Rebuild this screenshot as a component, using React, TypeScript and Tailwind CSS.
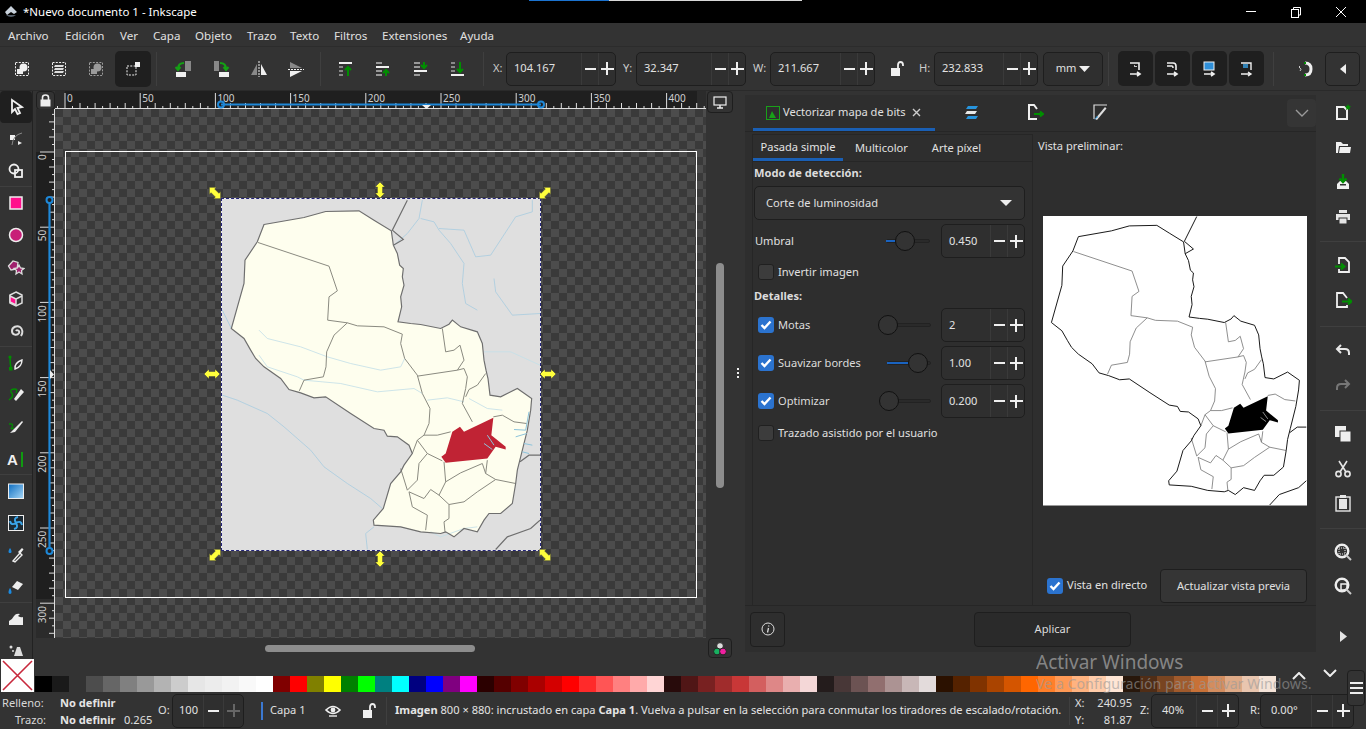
import type { ReactNode } from "react";

const palette = [
  "#000000", "#1a1a1a", "#333333", "#4d4d4d", "#666666", "#808080", "#999999", "#b3b3b3", "#cccccc", "#e6e6e6", "#ececec", "#f2f2f2", "#f9f9f9", "#ffffff",
  "#800000", "#ff0000", "#808000", "#ffff00", "#008000", "#00ff00", "#008080", "#00ffff", "#000080", "#0000ff", "#800080", "#ff00ff",
  "#2b0000", "#550000", "#800000", "#aa0000", "#d40000", "#ff0000", "#ff2a2a", "#ff5555", "#ff8080", "#ffaaaa", "#ffd5d5",
  "#280b0b", "#501616", "#782121", "#a02c2c", "#c83737", "#d35f5f", "#de8787", "#e9afaf", "#f4d7d7",
  "#241c1c", "#483737", "#6c5353", "#916f6f", "#ac9393", "#c8b7b7", "#e3dbdb",
  "#2b1100", "#552200", "#803300", "#aa4400", "#d45500", "#ff6600", "#ff7f2a", "#ff9955", "#ffb380", "#ffccaa", "#ffe6d5",
  "#28170b", "#502d16", "#784421", "#a05a2c", "#c87137", "#d38d5f", "#deaa87", "#e9c6af", "#f4e3d7",
];

const menus = [
  ["Archivo", "w-[57px]"], ["Edición", "w-[55px]"], ["Ver", "w-[33px]"], ["Capa", "w-[42px]"], ["Objeto", "w-[52px]"],
  ["Trazo", "w-[43px]"], ["Texto", "w-[44px]"], ["Filtros", "w-[48px]"], ["Extensiones", "w-[78px]"], ["Ayuda", "w-[50px]"],
];

// map traced in the 954x1050 space of the embedded image
const outline = "M190,163 L310,142 L375,124 L475,122 L520,150 L572,182 L578,225 L590,250 L597,285 L608,295 L605,320 L610,345 L600,380 L603,410 L592,455 L630,460 L660,463 L720,475 L745,462 L755,450 L780,470 L830,485 L845,520 L850,570 L856,600 L862,625 L868,675 L900,680 L950,655 L993,685 L990,720 L980,780 L960,860 L950,900 L945,940 L935,1000 L900,1030 L865,1030 L850,1050 L830,1085 L790,1075 L760,1100 L735,1085 L720,1090 L660,1085 L600,1070 L520,1065 L518,1050 L548,1015 L570,940 L600,905 L610,885 L635,850 L625,825 L590,800 L560,798 L550,780 L520,775 L450,730 L375,680 L340,683 L300,668 L265,658 L240,625 L190,590 L165,565 L150,540 L130,505 L92,475 L130,340 L133,270 L170,215 Z";
const borders = [
  "M172,217 L385,288 L410,362 L385,380 L381,450 L440,458 L470,467 L550,470 L605,492",
  "M440,458 L400,495 L378,545 L376,590 L368,620 L310,630 L296,662",
  "M605,492 L600,520 L612,565 L650,615 L665,670 L688,715 L685,760 L670,795",
  "M650,618 L770,600 L790,595 L800,620 L795,655 L785,700 L815,755",
  "M725,475 L735,545 L760,540 L778,525 L790,570 L770,600",
  "M855,610 L830,645 L805,658 L795,680",
  "M650,810 L670,795 L710,795 L750,785",
  "M635,850 L650,810 L680,850 L725,872",
  "M680,850 L655,880 L650,930 L620,960 L600,895",
  "M878,740 L905,735 L940,755 L978,760",
  "M730,875 L735,935 L715,975 L690,958 L670,985 L625,965 L635,1010 L680,1035 L675,1080",
  "M735,935 L780,908 L845,880 L855,910 L885,928 L945,940",
  "M885,928 L830,965 L790,995 L745,1003 L715,975",
  "M745,1003 L745,1045 L730,1055 L733,1085",
  "M860,870 L855,910",
];
const innerRivers = [
  "M175,480 L200,505 L300,530 L380,560 L450,580 L540,600 L600,590 L612,565",
  "M175,555 L200,590 L290,620 L310,630 L420,640 L530,665 L640,655 L665,670",
  "M680,690 L740,683 L790,695",
  "M805,685 L860,715 L905,720",
  "M690,1085 L720,1100 L790,1075 L830,1070",
  "M850,545 L930,545 L1018,585",
];
const outerRivers = [
  "M65,675 L110,690 L200,730 L250,770 L330,840 L370,890 L440,940 L510,985 L545,1015",
  "M665,90 L655,145 L620,190 L580,225",
  "M660,145 L700,155 L715,180 L750,220 L790,280 L785,340 L795,400 L830,420",
  "M715,175 L790,180 L825,260 L870,255 L945,140 L995,125 L995,90",
  "M880,325 L885,365 L935,435 L1018,430",
  "M65,420 L92,475",
  "M520,1070 L495,1090 L500,1138",
];
const neighbours = [
  "M620,90 L575,180 L608,208 L578,225",
  "M1018,855 L985,855 L958,875",
  "M1018,1050 L990,1075 L920,1100 L885,1138",
];
const red = "M778,770 L790,785 L878,743 L872,795 L915,830 L915,838 L885,830 L860,865 L735,878 L722,860 L735,850 L755,785 Z";

function MapArt({ preview }: { preview?: boolean }) {
  return (
    <svg viewBox="64 88 954 1050" className="block h-full w-full" fill="none">
      {!preview &&
        outerRivers.map((d) => <path key={d} d={d} stroke="#a9cde0" strokeWidth="2.5" />)}
      <path d={outline} fill={preview ? "#fff" : "#fefeee"} />
      {!preview &&
        innerRivers.map((d) => <path key={d} d={d} stroke="#c4e0e8" strokeWidth="2.5" />)}
      {borders.map((d) => (
        <path key={d} d={d} stroke={preview ? "#777" : "#8a8a80"} strokeWidth="3" />
      ))}
      <path d={outline} stroke={preview ? "#111" : "#6e6e6e"} strokeWidth="3.5" />
      {neighbours.map((d) => (
        <path key={d} d={d} stroke={preview ? "#111" : "#6e6e6e"} strokeWidth="3.5" />
      ))}
      <path d={red} fill={preview ? "#000" : "#c02334"} />
      {!preview && (
        <path
          d="M985,725 L975,780 L940,778 M978,790 L945,800 M970,820 L995,825 M965,845 L985,850 M860,795 L880,825 M850,820 L875,838"
          stroke="#8cc4dc"
          strokeWidth="3"
        />
      )}
      {preview && <path d="M860,800 L878,825 M852,820 L872,835" stroke="#fff" strokeWidth="2" />}
    </svg>
  );
}

function Glyph({ children, size = 18 }: { children: ReactNode; size?: number }) {
  return (
    <svg width={size} height={size} viewBox="0 0 18 18" fill="none" className="block shrink-0">
      {children}
    </svg>
  );
}

const W = "#f0f0f0";
const G = "#008f00";

const leftIcons: ReactNode[] = [
  <path d="M5 2 L15 9 L10.5 10 L13 15 L10.5 16 L8 11 L5 14 Z" stroke={W} strokeWidth="1.8" />,
  <g><rect x="3" y="5" width="5" height="5" fill={W} /><path d="M5 15 Q6 5 15 3" stroke="#888" /><path d="M11 11 L15 13 L11 15 Z" fill={W} /></g>,
  <g stroke={W} strokeWidth="1.8"><circle cx="7" cy="7" r="4.5" /><rect x="8" y="8" width="7" height="7" /></g>,
  <rect x="3" y="3" width="12" height="12" fill="#ff0f8c" stroke="#eee" strokeWidth="1.5" />,
  <circle cx="9" cy="9" r="6.5" fill="#c81e78" stroke="#eee" strokeWidth="1.5" />,
  <g stroke="#ddd" strokeWidth="1.3"><path d="M1.5 8 L6 3 L11 4.5 L10 11 L4 12 Z" fill="#a0206e" /><path d="M12 7 L13.5 10 L17 10.5 L14.5 12.5 L15 16 L12 14 L9 16 L9.5 12.5 L7 10.5 L10.5 10 Z" fill="#a0206e" /></g>,
  <g stroke="#ddd" strokeWidth="1.5"><path d="M9 2 L15 5 L15 13 L9 16 L3 13 L3 5 Z" /><path d="M3 6 L9 9 L9 15 L3 12 Z" fill="#ff0f8c" /><path d="M9 9 L15 6" /></g>,
  <path d="M9 9 C10 7 13 9 12 11 C10 14 5 13 5 9 C5 5 10 3 13 5 C16 7 16 11 14 14" stroke="#ddd" strokeWidth="2" />,
  <g><path d="M3 3 Q3 9 4 14" stroke={G} strokeWidth="1.5" /><circle cx="3" cy="3" r="1.6" fill={G} /><rect x="2" y="13" width="3.5" height="3.5" fill={G} /><path d="M8 15 Q7 9 15 6 Q15 13 8 15 Z" stroke="#eee" strokeWidth="1.4" /></g>,
  <g><path d="M2 14 Q8 10 4 6 Q3 3 8 3 Q11 3 9 7" stroke={G} strokeWidth="1.4" /><path d="M7 13 L14 3 L17 6 L9 15 Z" fill="#eee" /></g>,
  <g><path d="M2 6 Q7 5 5 9 Q3 12 7 10 " stroke={G} strokeWidth="1.3" /><path d="M3 15 L6 12 L15 3 L16 4 L8 14 Z" fill="#eee" /></g>,
  <g><text x="0" y="15" fontSize="15" fontWeight="700" fontFamily="Liberation Sans" fill={W}>A</text><rect x="14" y="2" width="2" height="15" fill="#109a10" /></g>,
  <g><defs><linearGradient id="grad1" x1="0" y1="0" x2="1" y2="1"><stop offset="0" stopColor="#0b6cc0" /><stop offset="1" stopColor="#a8d8f8" /></linearGradient></defs><rect x="1.5" y="2" width="15" height="14.5" fill="url(#grad1)" stroke="#eee" /></g>,
  <g><rect x="1.5" y="1.5" width="15" height="15" fill="#1d2a33" stroke="#eee" /><path d="M9 9 Q6 4 11 3 M9 9 Q14 6 15 11 M9 9 Q12 14 7 15 M9 9 Q4 12 3 7" stroke="#3aa4e8" strokeWidth="2" /></g>,
  <g><path d="M3 2 C1 5 1 7 3 7 C5 7 5 5 3 2 Z" fill="#1b8ae0" /><path d="M6 15 L13 7 L15 9 L8 16 Z" stroke="#eee" strokeWidth="1.4" /><path d="M11 6 L15 2 L16.5 3.5 L13 8 Z" fill="#eee" /></g>,
  <g><path d="M3 10 C1 13 1 16 3 16 C5 16 5 13 3 10 Z" fill="#1b8ae0" /><path d="M5 9 L10 3 L16 6 L11 12 Z" fill="#eee" /></g>,
  <path d="M2 15 L2 11 Q5 10 7 6 Q9 3 13 4 L11 6 Q14 8 16 7 L16 15 Z" fill="#eee" />,
  <g fill="#ddd"><path d="M10 5 L13 5 L16 14 L7 14 Z" /><circle cx="4" cy="5" r="1.5" /><circle cx="6" cy="9" r="1" /></g>,
];

const topIcons: ReactNode[] = [
  <g><rect x="2.5" y="2.5" width="13" height="13" stroke={W} strokeDasharray="2 1.3" /><rect x="4" y="9" width="6" height="5" fill={W} /><circle cx="10.5" cy="7.5" r="4" fill={W} /></g>,
  <g><rect x="2.5" y="2.5" width="13" height="13" stroke={W} strokeDasharray="2 1.3" /><path d="M5 5 H14 L13 7 H4 Z M5 8 H14 L13 10 H4 Z M5 11 H14 L13 13 H4 Z" fill="#ddd" /></g>,
  <g opacity="0.55"><rect x="2.5" y="2.5" width="13" height="13" stroke={W} strokeDasharray="2 1.3" /><rect x="4" y="9" width="6" height="5" fill={W} /><circle cx="10.5" cy="7.5" r="4" fill={W} /></g>,
];

const transformIcons: ReactNode[] = [
  <g><rect x="10" y="1" width="6" height="10" fill="#888" /><rect x="1" y="12" width="10" height="5" fill={W} /><path d="M9 3 Q3 3 3 9 M0.5 7 L3 10 L5.5 7" stroke="#14a014" strokeWidth="2" /></g>,
  <g><rect x="2" y="1" width="5" height="10" fill="#888" /><rect x="7" y="12" width="10" height="5" fill={W} /><path d="M8 3 Q14 3 14 9 M11.5 7 L14 10 L16.5 7" stroke="#14a014" strokeWidth="2" /></g>,
  <g><path d="M7 4 L7 15 L1 15 Z" fill="#888" /><path d="M11 4 L11 15 L17 15 Z" fill={W} /><path d="M9 1 V17" stroke={W} strokeDasharray="2 1" /></g>,
  <g><path d="M3 2 L15 8 L3 8 Z" fill="#888" /><path d="M3 11 L15 11 L3 17 Z" fill={W} /><path d="M1 9.5 H17" stroke={W} strokeDasharray="2 1" /></g>,
];

const raiseIcons: ReactNode[] = [
  <g><rect x="1" y="2" width="13" height="2" fill={W} /><path d="M1 7 H5 M1 11 H5 M1 15 H5" stroke="#888" strokeWidth="2" /><path d="M10 16 V8 M7 10 L10 7 L13 10" stroke={G} strokeWidth="2" /></g>,
  <g><rect x="1" y="6" width="13" height="2" fill={W} /><path d="M1 3 H7 M1 11 H7 M1 15 H7" stroke="#999" strokeWidth="2" /><path d="M11 16 V11 M8 13 L11 10 L14 13" stroke={G} strokeWidth="2" /></g>,
  <g><rect x="1" y="10" width="13" height="2" fill={W} /><path d="M1 3 H7 M1 7 H7 M1 15 H7" stroke="#999" strokeWidth="2" /><path d="M11 2 V7 M8 5 L11 8 L14 5" stroke={G} strokeWidth="2" /></g>,
  <g><rect x="1" y="14" width="13" height="2" fill={W} /><path d="M1 3 H5 M1 7 H5 M1 11 H5" stroke="#888" strokeWidth="2" /><path d="M10 2 V11 M7 9 L10 12 L13 9" stroke={G} strokeWidth="2" /></g>,
];

const snapIcons: ReactNode[] = [
  <g stroke={W} strokeWidth="1.6"><path d="M3 3 H12 V10" /><path d="M3 14 H12 M10 12 L13 14 L10 16" /><path d="M7 6 H9 V8" strokeDasharray="1 1" /></g>,
  <g stroke={W} strokeWidth="1.6"><path d="M3 3 H9 Q12 3 12 6 V10" /><path d="M3 6 H8 Q9 6 9 8" /><path d="M3 14 H12 M10 12 L13 14 L10 16" /></g>,
  <g><rect x="3" y="2" width="10" height="8" fill="#2f8fd8" stroke={W} /><path d="M3 14 H12 M10 12 L13 14 L10 16" stroke={W} strokeWidth="1.6" /></g>,
  <g stroke={W} strokeWidth="1.4"><path d="M3 3 H13 V10" /><path d="M5 5 L10 5 M5 7 L10 7" stroke="#3aa4e8" /><path d="M3 14 H12 M10 12 L13 14 L10 16" /></g>,
];

const rightIcons: ReactNode[][] = [
  [
    <g><path d="M3 3 H10 L13 6 V15 H3 Z" stroke={W} strokeWidth="2" /><path d="M14 0 L15 2 L17 2.5 L15.5 4 L16 6 L14 5 L12 6 L12.5 4 L11 2.5 L13 2 Z" fill={G} /></g>,
    <path d="M2 3 H7 L9 5 H14 V7 H5 L4 14 H16 L17 8 H6 L5 14 H2 Z" fill={W} />,
    <g><path d="M3 11 V16 H15 V11 L12 8 H6 Z" fill={W} /><rect x="6" y="11" width="6" height="1.5" fill="#333" /><path d="M9 1 V9 M5.5 5.5 L9 9 L12.5 5.5" stroke={G} strokeWidth="2.4" /></g>,
    <g fill="#e4e4e4"><rect x="5" y="2" width="8" height="3" /><rect x="2" y="6" width="14" height="6" /><rect x="5" y="10" width="8" height="6" stroke="#333" /></g>,
  ],
  [
    <g><path d="M5 8 V2 H11 L15 6 V16 H5 V13" stroke={W} strokeWidth="1.8" /><path d="M1 10.5 H10 M7 7.5 L10.5 10.5 L7 13.5" stroke={G} strokeWidth="2" /></g>,
    <g><path d="M13 7 L9 2 H3 V16 H13 V14" stroke={W} strokeWidth="1.8" /><path d="M8 10.5 H17 M14 7.5 L17.5 10.5 L14 13.5" stroke={G} strokeWidth="2" /></g>,
  ],
  [
    <path d="M7 3 L3 7 L7 11 M3 7 H11 Q15 7 15 11 V13" stroke="#e8e8e8" strokeWidth="2" />,
    <path d="M11 3 L15 7 L11 11 M15 7 H7 Q3 7 3 11 V13" stroke="#777" strokeWidth="2" />,
  ],
  [
    <g><rect x="1" y="1" width="11" height="11" fill="#eee" /><rect x="6" y="6" width="11" height="11" fill="#eee" stroke="#333" /></g>,
    <g stroke="#e6e6e6" strokeWidth="1.6"><circle cx="4.5" cy="14" r="2.6" /><circle cx="13.5" cy="14" r="2.6" /><path d="M6 12 L13 1 M12 12 L5 1" /></g>,
    <g><rect x="2" y="3" width="14" height="14" stroke="#e6e6e6" strokeWidth="1.4" /><rect x="6" y="1" width="6" height="3" fill="#e6e6e6" /><rect x="5" y="5" width="8" height="10" fill="#e6e6e6" /></g>,
  ],
  [
    <g><circle cx="8" cy="8" r="6.3" stroke="#eee" strokeWidth="2.4" /><rect x="5" y="5" width="6" height="6" stroke="#eee" strokeDasharray="1 1" /><path d="M12 12 L17 17" stroke="#ccc" strokeWidth="2" /></g>,
    <g><circle cx="8" cy="8" r="6.3" stroke="#eee" strokeWidth="2.4" /><rect x="7" y="7" width="6" height="6" stroke="#eee" strokeWidth="1.5" /><path d="M12 12 L17 17" stroke="#ccc" strokeWidth="2" /></g>,
  ],
];

function Spin({ value, w, labelW = 17, dim, textClass = "pl-[7px]" }: { value: string; w: string; labelW?: number; dim?: boolean; textClass?: string }) {
  return (
    <div className={`flex h-[34px] items-stretch rounded-[5px] border border-[#1e1e1e] bg-[#2f2f2f] ${w}`}>
      <div className={`flex min-w-0 flex-1 items-center text-[#e2e2e2] ${textClass}`}>{value}</div>
      <div className="flex items-center justify-center border-l border-[#3a3a3a]" style={{ width: labelW }}>
        <div className="h-[2px] w-[11px] bg-[#efefef]" />
      </div>
      <div className="relative flex items-center justify-center border-l border-[#3a3a3a]" style={{ width: labelW }}>
        <div className={`h-[2px] w-[13px] ${dim ? "bg-[#666]" : "bg-[#efefef]"}`} />
        <div className={`absolute h-[13px] w-[2px] ${dim ? "bg-[#666]" : "bg-[#efefef]"}`} />
      </div>
    </div>
  );
}

function Check({ on }: { on?: boolean }) {
  return on ? (
    <div className="flex h-[16px] w-[16px] shrink-0 items-center justify-center rounded-[3px] bg-[#2b73cf]">
      <svg width="12" height="10" viewBox="0 0 12 10" fill="none">
        <path d="M1.5 5 L4.5 8 L10.5 1.5" stroke="#fff" strokeWidth="2.4" />
      </svg>
    </div>
  ) : (
    <div className="h-[16px] w-[16px] shrink-0 rounded-[3px] border border-[#202020] bg-[#3c3c3c]" />
  );
}

function Slider({ trackLeft, trackW, knob, fill }: { trackLeft: number; trackW: number; knob: number; fill: number }) {
  return (
    <div className="relative h-[20px] flex-1">
      <div className="absolute top-[8px] h-[4px] rounded-full border border-[#222] bg-[#2a2a2a]" style={{ left: trackLeft, width: trackW }} />
      {fill > 0 && <div className="absolute top-[9px] h-[2px] bg-[#1a63c0]" style={{ left: trackLeft, width: fill }} />}
      <div className="absolute top-0 h-[20px] w-[20px] rounded-full border border-[#111] bg-[#333]" style={{ left: knob }} />
    </div>
  );
}

function OptionRow({ label, value, on, trackLeft, trackW, knob, fill }: { label: string; value: string; on: boolean; trackLeft: number; trackW: number; knob: number; fill: number }) {
  return (
    <div className="flex h-[34px] items-center pl-[4px]">
      <Check on={on} />
      <div className="ml-[4px] w-[96px] shrink-0 whitespace-nowrap text-[#dcdcdc]">{label}</div>
      <Slider trackLeft={trackLeft} trackW={trackW} knob={knob} fill={fill} />
      <Spin value={value} w="w-[84px]" />
    </div>
  );
}

function TopRuler() {
  const ticks = [];
  for (let u = -5; u <= 430; u += 5) {
    const x = 10 + u * 1.504;
    const h = u % 50 === 0 ? 16 : u % 10 === 0 ? 6 : 3;
    ticks.push(<path key={u} d={`M${x.toFixed(1)} 18 V${18 - h}`} stroke="#ddd" />);
  }
  const labels = [0, 50, 100, 150, 200, 250, 300, 350, 400];
  return (
    <svg width="651" height="18" className="block">
      <rect width="651" height="18" fill="#2b2b2b" />
      <rect x="10" width="632" height="18" fill="#1f1f1f" />
      {ticks}
      <path d="M0 17.5 H651" stroke="#ddd" />
      {labels.map((n) => (
        <text key={n} x={12 + n * 1.504} y="11" fontSize="10" fill="#cfcfcf" fontFamily="Noto Sans, sans-serif">{n}</text>
      ))}
      <path d="M166 13.5 H486" stroke="#1e88d8" strokeWidth="2.2" />
      <circle cx="166" cy="13.5" r="3" fill="none" stroke="#1e88d8" strokeWidth="2" />
      <circle cx="486" cy="13.5" r="3" fill="none" stroke="#1e88d8" strokeWidth="2" />
      <path d="M367 14 L376 14 L371.5 18 Z" fill="#eee" />
    </svg>
  );
}

function LeftRuler() {
  const ticks = [];
  for (let u = -25; u <= 335; u += 5) {
    const y = 43 + u * 1.504;
    const h = u % 50 === 0 ? 15 : u % 10 === 0 ? 6 : 3;
    ticks.push(<path key={u} d={`M19 ${y.toFixed(1)} H${19 - h}`} stroke="#ddd" />);
  }
  const labels = [0, 50, 100, 150, 200, 250, 300];
  return (
    <svg width="19" height="529" className="block">
      <rect width="19" height="529" fill="#2b2b2b" />
      <rect y="43" width="19" height="447" fill="#1f1f1f" />
      {ticks}
      <path d="M18.5 0 V529" stroke="#ddd" />
      {labels.map((n) => (
        <text key={n} transform={`translate(10 ${45 + n * 1.504 + String(n).length * 6}) rotate(-90)`} fontSize="10" fill="#cfcfcf" fontFamily="Noto Sans, sans-serif">{n}</text>
      ))}
      <path d="M13.5 91 V442" stroke="#1e88d8" strokeWidth="2.2" />
      <circle cx="13.5" cy="91" r="3" fill="#1f1f1f" stroke="#1e88d8" strokeWidth="2" />
      <circle cx="13.5" cy="442" r="3" fill="#1f1f1f" stroke="#1e88d8" strokeWidth="2" />
      <path d="M14 261 L14 270 L18 265.5 Z" fill="#eee" />
    </svg>
  );
}

function Handle({ pos, rotate }: { pos: string; rotate: string }) {
  return (
    <div className={`absolute h-[16px] w-[16px] ${pos} ${rotate}`}>
      <svg width="16" height="16" viewBox="0 0 16 16" className="block">
        <path d="M8 0 L13 5 H10.6 V11 H13 L8 16 L3 11 H5.4 V5 H3 Z" fill="#ffff3c" stroke="#3a3a3a" strokeWidth="0.5" />
      </svg>
    </div>
  );
}

function Canvas() {
  return (
    <div className="relative h-[529px] w-[651px] overflow-hidden bg-[#3f3f3f] bg-[conic-gradient(#4c4c4c_25%,#3a3a3a_0_50%,#4c4c4c_0_75%,#3a3a3a_0)] bg-[length:16px_16px]">
      <div className="absolute left-[10px] top-[42px] h-[447px] w-[632px] border border-white" />
      <div className="absolute left-[167px] top-[90px] h-[351px] w-[318px] bg-[#dfdfdf] outline outline-1 outline-[#e8e8e8]">
        <MapArt />
        <div className="absolute -inset-px border border-dashed border-[#24247a]" />
      </div>
      <Handle pos="left-[152px] top-[76px]" rotate="-rotate-45" />
      <Handle pos="left-[482px] top-[76px]" rotate="rotate-45" />
      <Handle pos="left-[152px] top-[438px]" rotate="rotate-45" />
      <Handle pos="left-[482px] top-[438px]" rotate="-rotate-45" />
      <Handle pos="left-[317px] top-[73px]" rotate="" />
      <Handle pos="left-[317px] top-[442px]" rotate="" />
      <Handle pos="left-[149px] top-[257px]" rotate="rotate-90" />
      <Handle pos="left-[485px] top-[257px]" rotate="rotate-90" />
    </div>
  );
}

function ToolbarDivider() {
  return <div className="mx-[5px] h-[34px] w-px bg-[#3f3f3f]" />;
}

export default function App() {
  return (
    <div className="relative flex h-[729px] w-[1366px] flex-col overflow-hidden bg-[#333333] font-['Noto_Sans',sans-serif] text-[11.1px] text-[#e0e0e0]">
      {/* title bar */}
      <div className="relative flex h-[23px] shrink-0 items-center bg-black pl-[4px] text-white">
        <svg width="14" height="14" viewBox="0 0 14 14" className="block">
          <path d="M7 1 L13 7 L10 9 L7 7 L3 10 L1 7 Z" fill="#c9d2dc" />
          <path d="M2 10 Q7 14 12 10 Z" fill="#56606c" />
        </svg>
        <div className="ml-[5px] text-[11.5px]">*Nuevo documento 1 - Inkscape</div>
        <div className="absolute left-[529px] top-0 flex h-px">
          <div className="w-[80px] bg-[#1b73d0]" />
          <div className="w-[193px] bg-[#d8d8d8]" />
        </div>
        <div className="ml-auto flex items-center">
          <div className="mr-[34px] h-px w-[10px] bg-white" />
          <svg width="12" height="12" viewBox="0 0 12 12" fill="none" className="mr-[33px]">
            <rect x="1.5" y="3.5" width="7" height="8" stroke="#fff" />
            <path d="M3.5 3 V1.5 H10.5 V9 H9" stroke="#fff" />
          </svg>
          <svg width="12" height="12" viewBox="0 0 12 12" className="mr-[19px]">
            <path d="M1 1 L11 11 M11 1 L1 11" stroke="#fff" />
          </svg>
        </div>
      </div>

      {/* menu */}
      <div className="flex h-[24px] shrink-0 items-center border-b border-[#2c2c2c] pl-[8px] pt-[2px] text-[11.6px] text-[#e0e0e0]">
        {menus.map(([name, width]) => (
          <div key={name} className={width}>{name}</div>
        ))}
      </div>

      {/* commands */}
      <div className="flex h-[44px] shrink-0 items-center border-b border-[#2a2a2a] pl-[3px]">
        {topIcons.map((icon, i) => (
          <div key={i} className="flex h-[36px] w-[37px] items-center justify-center"><Glyph>{icon}</Glyph></div>
        ))}
        <div className="ml-[1px] flex h-[36px] w-[36px] items-center justify-center rounded-[5px] bg-[#1f1f1f]">
          <Glyph>
            <rect x="3" y="6" width="9" height="9" stroke={W} strokeDasharray="2 1.3" />
            <rect x="11" y="2" width="5" height="5" fill={W} />
          </Glyph>
        </div>
        <ToolbarDivider />
        <div className="ml-[3px] flex">
          {transformIcons.map((icon, i) => (
            <div key={i} className="flex h-[36px] w-[37.5px] items-center justify-center"><Glyph>{icon}</Glyph></div>
          ))}
        </div>
        <ToolbarDivider />
        <div className="ml-[2px] flex">
          {raiseIcons.map((icon, i) => (
            <div key={i} className="flex h-[36px] w-[37.5px] items-center justify-center"><Glyph>{icon}</Glyph></div>
          ))}
        </div>
        <ToolbarDivider />
        <div className="ml-[4px] w-[13px] text-[#ccc]">X:</div>
        <Spin value="104.167" w="w-[110px]" />
        <div className="ml-[7px] w-[13px] text-[#ccc]">Y:</div>
        <Spin value="32.347" w="w-[110px]" />
        <div className="ml-[7px] w-[17px] text-[#ccc]">W:</div>
        <Spin value="211.667" w="w-[105px]" />
        <div className="flex w-[44px] items-center justify-center">
          <svg width="14" height="16" viewBox="0 0 14 16" fill="none">
            <path d="M8 7 V4 Q8 1 10.5 1 Q13 1 13 4 V5" stroke={W} strokeWidth="1.8" />
            <rect x="1" y="7" width="9" height="8" fill={W} />
          </svg>
        </div>
        <div className="w-[15px] text-[#ccc]">H:</div>
        <Spin value="232.833" w="w-[104px]" />
        <div className="ml-[5px] flex h-[34px] w-[60px] items-center justify-center gap-[3px] rounded-[5px] border border-[#1e1e1e] bg-[#2f2f2f]">
          <span>mm</span>
          <svg width="11" height="6" viewBox="0 0 11 6"><path d="M0 0 H11 L5.5 6 Z" fill="#eee" /></svg>
        </div>
        <ToolbarDivider />
        <div className="ml-[4px] flex gap-[2px]">
          {snapIcons.map((icon, i) => (
            <div key={i} className="flex h-[35px] w-[35px] items-center justify-center rounded-[5px] bg-[#1f1f1f]"><Glyph>{icon}</Glyph></div>
          ))}
        </div>
        <div className="ml-[9px] h-[34px] w-px bg-[#3f3f3f]" />
        <div className="ml-[22px]">
          <Glyph>
            <path d="M9 3 Q15 3 15 9 Q15 15 9 15" stroke={W} strokeWidth="3" />
            <path d="M4 6 Q2 7 4 8 Q6 9 4 11" stroke="#ccc" />
            <rect x="8" y="2" width="2" height="2" fill={G} />
            <rect x="8" y="14" width="2" height="2" fill={G} />
          </Glyph>
        </div>
        <div className="ml-[11px] flex h-[34px] w-[35px] items-center justify-center rounded-[5px] border border-[#1e1e1e]">
          <svg width="6" height="10" viewBox="0 0 6 10"><path d="M6 0 V10 L0 5 Z" fill="#eee" /></svg>
        </div>
      </div>

      {/* main area */}
      <div className="flex h-[568px] shrink-0">
        <div className="w-[33px] shrink-0 overflow-hidden border-r border-[#222]">
          {leftIcons.map((icon, i) => (
            <div
              key={i}
              className={`flex h-[32px] items-center justify-center ${i === 0 ? "rounded-[4px] bg-[#1f1f1f]" : ""} ${[2, 7, 11, 15].includes(i) ? "border-b border-[#3f3f3f]" : ""}`}
            >
              <Glyph>{icon}</Glyph>
            </div>
          ))}
        </div>

        <div className="flex w-[673px] shrink-0 flex-col">
          <div className="flex h-[18px]">
            <div className="w-[22px] shrink-0 pl-[3px]">
              <div className="flex h-[19px] w-[19px] items-center justify-center rounded-[4px] border border-[#1e1e1e] bg-[#333]">
                <svg width="11" height="13" viewBox="0 0 11 13" fill="none">
                  <path d="M2.5 6 V3.5 Q2.5 1 5.5 1 Q8.5 1 8.5 3.5 V6" stroke="#eee" strokeWidth="1.6" />
                  <rect x="0.5" y="5.5" width="10" height="7" fill="#eee" />
                </svg>
              </div>
            </div>
            <TopRuler />
          </div>
          <div className="flex">
            <div className="w-[3px] shrink-0" />
            <LeftRuler />
            <Canvas />
          </div>
          <div className="ml-[232px] mt-[7px] h-[7px] w-[210px] rounded-full bg-[#8d8d8d]" />
        </div>

        <div className="flex w-[27px] shrink-0 flex-col items-center">
          <div className="flex h-[22px] w-[26px] items-center justify-center rounded-[4px] border border-[#1e1e1e]">
            <svg width="14" height="13" viewBox="0 0 14 13" fill="none">
              <rect x="1" y="1" width="12" height="8" stroke="#eee" strokeWidth="1.2" />
              <path d="M4 12 H10 M7 9 V12" stroke="#eee" strokeWidth="1.5" />
            </svg>
          </div>
          <div className="mt-[150px] h-[225px] w-[8px] rounded-full bg-[#8d8d8d]" />
          <div className="mt-auto mb-[1px] flex h-[20px] w-[24px] items-center justify-center rounded-[4px] border border-[#1e1e1e]">
            <svg width="16" height="15" viewBox="0 0 16 15">
              <circle cx="8" cy="5" r="3.4" fill="#ddd" stroke="#222" />
              <circle cx="5" cy="10.5" r="3.4" fill="#18b060" stroke="#222" />
              <circle cx="11" cy="10.5" r="3.4" fill="#f020a0" stroke="#222" />
            </svg>
          </div>
        </div>

        <div className="flex w-[12px] shrink-0 flex-col items-center justify-center gap-[2px] pb-[5px] pr-[2px]">
          <div className="h-[2px] w-[2px] bg-[#eee]" />
          <div className="h-[2px] w-[2px] bg-[#eee]" />
          <div className="h-[2px] w-[2px] bg-[#eee]" />
        </div>

        {/* dock */}
        <div className="mt-[4px] flex h-[557px] w-[571px] shrink-0 flex-col bg-[#2e2e2e]">
          <div className="flex h-[37px] shrink-0 border-b border-[#262626] pl-[8px]">
            <div className="flex w-[182px] items-center gap-[3px] border-b-[3px] border-[#1a5fb4] pl-[13px] pt-[2px]">
              <svg width="14" height="14" viewBox="0 0 14 14" fill="none">
                <rect x="0.5" y="0.5" width="13" height="13" stroke="#19a019" />
                <path d="M3 12 L6 5 L10 12 Z" fill="#19a019" />
              </svg>
              <span className="whitespace-nowrap">Vectorizar mapa de bits</span>
              <svg width="9" height="9" viewBox="0 0 9 9" className="ml-[3px]"><path d="M1 1 L8 8 M8 1 L1 8" stroke="#ccc" strokeWidth="1.4" /></svg>
            </div>
            <div className="ml-[28px] flex items-center pb-[2px]">
              <Glyph>
                <path d="M5 3 H15 L13 6 H3 Z" fill="#2794dc" />
                <path d="M4 8 H14 L12 11 H2 Z" fill="#e8e8e8" />
                <path d="M5 13 H15 L13 16 H3 Z" fill="#2794dc" />
              </Glyph>
            </div>
            <div className="ml-[45px] flex items-center pb-[2px]">
              <Glyph>
                <path d="M11 6 L8 2 H3 V16 H11" stroke={W} strokeWidth="2" />
                <path d="M8 11 H17 M14 8.5 L17 11 L14 13.5" stroke={G} strokeWidth="2" />
              </Glyph>
            </div>
            <div className="ml-[47px] flex items-center pb-[2px]">
              <Glyph>
                <path d="M3 16 V2 H16" stroke="#ddd" strokeWidth="1.2" />
                <path d="M4 16 L14 4 L15.5 5.5 L6 17 Z" fill="#ddd" />
                <path d="M3 17 L6 13 L7 14 Z" fill="#2794dc" />
              </Glyph>
            </div>
            <div className="ml-auto mt-[4px] flex h-[28px] w-[29px] items-center justify-center rounded-[4px] bg-[#353535]">
              <svg width="14" height="8" viewBox="0 0 14 8" fill="none"><path d="M1 1 L7 7 L13 1" stroke="#9a9a9a" strokeWidth="1.4" /></svg>
            </div>
          </div>

          <div className="flex h-[474px] shrink-0 border-b border-[#262626]">
            <div className="ml-[7px] mt-[2px] flex w-[281px] shrink-0 flex-col border-x border-t border-[#262626]">
              <div className="flex h-[27px] shrink-0 border-b border-[#262626]">
                <div className="flex w-[90px] items-center justify-center border-b-[3px] border-[#1a5fb4] pt-[2px] text-[#e4e4e4]">Pasada simple</div>
                <div className="ml-[12px] flex items-center">Multicolor</div>
                <div className="ml-[24px] flex items-center">Arte píxel</div>
              </div>
              <div className="flex flex-col pl-[1px] pr-[7px]">
                <div className="mt-[2px] h-[18px] font-bold leading-[18px] text-[#dcdcdc]">Modo de detección:</div>
                <div className="mt-[4px] flex h-[34px] items-center justify-between rounded-[5px] border border-[#1e1e1e] bg-[#333] pl-[11px] pr-[12px]">
                  <span>Corte de luminosidad</span>
                  <svg width="12" height="6" viewBox="0 0 12 6"><path d="M0 0 H12 L6 6 Z" fill="#eee" /></svg>
                </div>
                <div className="mt-[4px] flex h-[34px] items-center">
                  <div className="w-[100px] shrink-0 pl-[1px]">Umbral</div>
                  <Slider trackLeft={32} trackW={44} knob={41} fill={10} />
                  <Spin value="0.450" w="w-[84px]" />
                </div>
                <div className="mt-[4px] flex h-[20px] items-center pl-[4px]">
                  <Check />
                  <div className="ml-[4px]">Invertir imagen</div>
                </div>
                <div className="mt-[5px] h-[18px] font-bold leading-[18px] text-[#dcdcdc]">Detalles:</div>
                <div className="mt-[3px] flex flex-col gap-[4px]">
                  <OptionRow label="Motas" value="2" on trackLeft={5} trackW={52} knob={4} fill={0} />
                  <OptionRow label="Suavizar bordes" value="1.00" on trackLeft={13} trackW={44} knob={34} fill={24} />
                  <OptionRow label="Optimizar" value="0.200" on trackLeft={5} trackW={52} knob={5} fill={0} />
                </div>
                <div className="mt-[5px] flex h-[20px] items-center pl-[4px]">
                  <Check />
                  <div className="ml-[4px]">Trazado asistido por el usuario</div>
                </div>
              </div>
            </div>

            <div className="flex min-w-0 flex-1 flex-col pl-[5px] pr-[9px]">
              <div className="mt-[5px] h-[18px] leading-[18px]">Vista preliminar:</div>
              <div className="ml-[5px] mt-[61px] h-[290px] w-[264px] border-b border-[#999] bg-white">
                <MapArt preview />
              </div>
              <div className="mt-[63px] flex items-center pl-[9px]">
                <Check on />
                <div className="ml-[4px] -mt-[1px]">Vista en directo</div>
                <div className="ml-auto flex h-[34px] w-[147px] items-center justify-center rounded-[4px] border border-[#1e1e1e] bg-[#353535]">Actualizar vista previa</div>
              </div>
            </div>
          </div>

          <div className="flex h-[46px] shrink-0 items-center pl-[5px]">
            <div className="flex h-[35px] w-[35px] items-center justify-center rounded-[4px] border border-[#1e1e1e]">
              <svg width="14" height="14" viewBox="0 0 14 14" fill="none">
                <circle cx="7" cy="7" r="6" stroke="#ddd" />
                <path d="M7.5 6 L6.5 10.5 M7.7 3.5 V4.5" stroke="#ddd" strokeWidth="1.3" />
              </svg>
            </div>
            <div className="ml-[189px] flex h-[35px] w-[157px] items-center justify-center rounded-[4px] border border-[#1e1e1e] bg-[#2a2a2a] text-[#dcdcdc]">Aplicar</div>
          </div>
        </div>

        {/* right commands */}
        <div className="ml-[4px] flex w-[46px] shrink-0 flex-col items-center pt-[5px]">
          {rightIcons.map((group, g) => (
            <div key={g} className={`flex w-full flex-col items-center ${g === 2 ? "mt-[9px] border-t border-[#3f3f3f] pt-[7px]" : g > 0 ? "mt-[7px] border-t border-[#3f3f3f] pt-[6px]" : ""}`}>
              {group.map((icon, i) => (
                <div key={i} className="flex h-[34.5px] items-center justify-center"><Glyph>{icon}</Glyph></div>
              ))}
            </div>
          ))}
          <div className="mt-[27px]">
            <svg width="7" height="11" viewBox="0 0 7 11"><path d="M0 0 L7 5.5 L0 11 Z" fill="#e4e4e4" /></svg>
          </div>
        </div>
      </div>

      {/* palette */}
      <div className="flex h-[33px] shrink-0 items-end">
        <div className="ml-[1px] h-[33px] w-[33px] shrink-0 bg-white">
          <svg width="33" height="33" viewBox="0 0 33 33"><path d="M2 2 L31 31 M31 2 L2 31" stroke="#c8283c" strokeWidth="1.6" /></svg>
        </div>
        <div className="ml-px flex h-[16px] w-[1241px] shrink-0">
          {palette.map((c, i) => (
            <div key={i} className="h-full flex-1" style={{ background: c }} />
          ))}
        </div>
        <div className="relative flex h-full flex-1 items-center pb-[2px]">
          <svg width="14" height="8" viewBox="0 0 14 8" fill="none" className="ml-[16px] mt-[2px]"><path d="M1 7 L7 1 L13 7" stroke="#eee" strokeWidth="2" /></svg>
          <svg width="14" height="8" viewBox="0 0 14 8" fill="none" className="ml-[17px] -mt-[4px]"><path d="M1 1 L7 7 L13 1" stroke="#eee" strokeWidth="2" /></svg>
          <div className="absolute left-[71px] top-[11px] z-10 flex h-[36px] w-[18px] flex-col items-center justify-center gap-[3px] rounded-[4px] border border-[#1e1e1e] bg-[#333]">
            <div className="h-[2px] w-[13px] bg-[#eee]" />
            <div className="h-[2px] w-[13px] bg-[#eee]" />
            <div className="h-[2px] w-[13px] bg-[#eee]" />
          </div>
        </div>
      </div>

      {/* status */}
      <div className="flex h-[37px] shrink-0 items-center">
        <div className="w-[58px] shrink-0 pl-[2px] text-[#d8d8d8]">
          <div className="h-[17px] leading-[17px]">Relleno:</div>
          <div className="h-[17px] pl-[13px] leading-[17px]">Trazo:</div>
        </div>
        <div className="w-[66px] shrink-0 pl-[2px] font-bold text-[#e4e4e4]">
          <div className="h-[17px] leading-[17px]">No definir</div>
          <div className="h-[17px] leading-[17px]">No definir</div>
        </div>
        <div className="w-[34px] shrink-0 pt-[17px] leading-[17px]">0.265</div>
        <div className="w-[14px] shrink-0">O:</div>
        <Spin value="100" w="w-[72px]" labelW={20} dim textClass="pl-[6px]" />
        <div className="ml-[17px] h-[18px] w-[2px] bg-[#3b78d0]" />
        <div className="ml-[7px] w-[50px]">Capa 1</div>
        <svg width="16" height="14" viewBox="0 0 16 14" fill="none" className="ml-[5px]">
          <path d="M1 6 Q8 -1 15 6 Q8 13 1 6 Z" stroke="#eee" strokeWidth="1.6" />
          <circle cx="8" cy="6" r="2.4" fill="#eee" />
          <path d="M4 12 H12" stroke="#eee" strokeWidth="1.4" />
        </svg>
        <svg width="14" height="16" viewBox="0 0 14 16" fill="none" className="ml-[21px]">
          <path d="M8 7 V4 Q8 1 10.5 1 Q13 1 13 4 V5" stroke={W} strokeWidth="1.8" />
          <rect x="1" y="7" width="9" height="8" fill={W} />
        </svg>
        <div className="ml-[10px] h-[28px] w-px bg-[#3f3f3f]" />
        <div className="ml-[8px] w-[674px] shrink-0 whitespace-nowrap text-[#e4e4e4]">
          <b>Imagen</b> 800 × 880: incrustado en capa <b>Capa 1</b>. Vuelva a pulsar en la selección para conmutar los tiradores de escalado/rotación.
        </div>
        <div className="h-[28px] w-px bg-[#3f3f3f]" />
        <div className="ml-[5px] w-[57px] shrink-0">
          <div className="flex h-[17px] items-center justify-between leading-[17px]"><span>X:</span><span>240.95</span></div>
          <div className="flex h-[17px] items-center justify-between leading-[17px]"><span>Y:</span><span>81.87</span></div>
        </div>
        <div className="ml-[8px] w-[11px] shrink-0">Z:</div>
        <Spin value="40%" w="w-[88px]" labelW={21} textClass="pl-[10px]" />
        <div className="ml-[11px] w-[10px] shrink-0">R:</div>
        <Spin value="0.00°" w="w-[94px]" labelW={21} textClass="pl-[10px]" />
      </div>

      {/* activation watermark */}
      <div className="pointer-events-none absolute left-[1036px] top-[650px] text-[#9a9a9a]">
        <div className="text-[19px] leading-[24px] opacity-80">Activar Windows</div>
        <div className="text-[14.2px] leading-[20px] opacity-60">Ve a Configuración para activar Windows.</div>
      </div>
    </div>
  );
}
